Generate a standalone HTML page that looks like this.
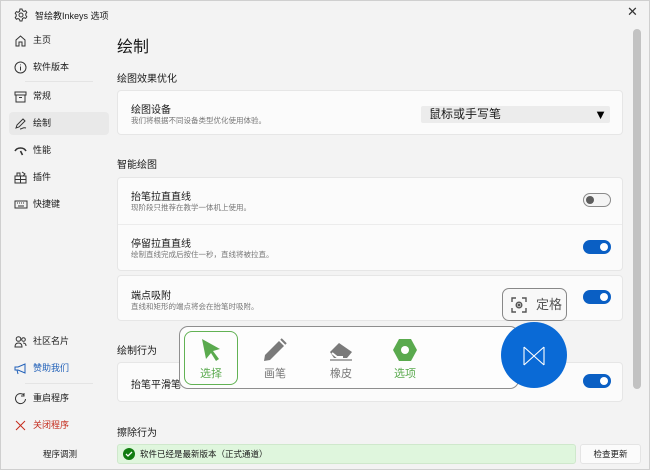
<!DOCTYPE html><html><head><meta charset="utf-8"><style>
*{box-sizing:border-box;margin:0;padding:0}
body{width:650px;height:470px;overflow:hidden;background:#f3f3f3;font-family:"Liberation Sans","Noto Sans CJK SC",sans-serif;color:#1a1a1a;position:relative;border:1px solid #cfcfcf}
.a{position:absolute}
.nav{position:absolute;left:8px;width:100px;height:23px;font-size:9px;line-height:23px;padding-left:24px;border-radius:4px}
.nav svg{position:absolute;left:5px;top:5px}
.sec{position:absolute;left:116px;font-size:10px}
.card{position:absolute;left:116px;width:506px;background:#fbfbfb;border:1px solid #e6e6e6;border-radius:4px}
.t{position:absolute;left:13px;font-size:10px}
.s{position:absolute;left:13px;font-size:7.5px;color:#777}
.tg{position:absolute;left:582px;width:28px;height:14px;border-radius:7px;background:#0a5fc4}
.tg::after{content:"";position:absolute;right:3px;top:3px;width:8px;height:8px;border-radius:50%;background:#fff}
.tg.off{background:#f4f4f4;border:1px solid #8a8a8a}
.tg.off::after{left:2px;top:2px;width:8px;height:8px;background:#5d5d5d}
.sep{position:absolute;left:24px;width:68px;height:1px;background:#e4e4e4}
.ti{position:absolute;width:50px;text-align:center;font-size:11px;color:#777}
</style></head><body>
<svg class="a" style="left:13px;top:7px" width="14" height="14" viewBox="0 0 14 14" fill="none" stroke="#333" stroke-width="1"><circle cx="7" cy="7" r="2"/><path d="M6 1h2l.5 1.7 1.5.8 1.6-.7 1.2 1.6-1 1.4v1.6l1 1.4-1.2 1.6-1.6-.7-1.5.8L8 13H6l-.5-1.7-1.5-.8-1.6.7-1.2-1.6 1-1.4V6.6l-1-1.4 1.2-1.6 1.6.7 1.5-.8z"/></svg>
<div class="a" style="left:34px;top:8px;font-size:9px">智绘教Inkeys 选项</div>
<div class="a" style="left:626px;top:3px;font-size:13px;color:#333">✕</div>

<div class="nav" style="top:28px"><svg width="13" height="13" viewBox="0 0 13 13" fill="none" stroke="#333"><path d="M2 6l4.5-4 4.5 4v6H8V8H5v4H2z"/></svg>主页</div>
<div class="nav" style="top:55px"><svg width="13" height="13" viewBox="0 0 13 13" fill="none" stroke="#333"><circle cx="6.5" cy="6.5" r="5.5"/><path d="M6.5 5.5v4M6.5 3.5v.8"/></svg>软件版本</div>
<div class="sep" style="top:80px"></div>
<div class="nav" style="top:84px"><svg width="13" height="13" viewBox="0 0 13 13" fill="none" stroke="#333"><path d="M1 2h11v3H1zM2 5v7h9V5M5 7.5h3"/></svg>常规</div>
<div class="nav" style="top:111px;background:#e9e9e9"><svg width="13" height="13" viewBox="0 0 13 13" fill="none" stroke="#333"><path d="M2 11l1-3 6-6 2 2-6 6zM6 12c2 0 3-2 6-1"/></svg>绘制</div>
<div class="nav" style="top:138px"><svg width="13" height="13" viewBox="0 0 13 13" fill="none" stroke="#333"><path d="M1 7a6 5 0 0 1 11 0M6.5 7l2 4" stroke-width="1.6"/></svg>性能</div>
<div class="nav" style="top:165px"><svg width="13" height="13" viewBox="0 0 13 13" fill="none" stroke="#333"><path d="M1 5h11v7H1zM6.5 5v7M1 8.5h11M3 5V2h3v3M8 1l3 2-2 2"/></svg>插件</div>
<div class="nav" style="top:192px"><svg width="14" height="13" viewBox="0 0 14 13" fill="none" stroke="#333"><rect x="1" y="3" width="12" height="7"/><path d="M3 5h1M5 5h1M7 5h1M9 5h1M4 8h6"/></svg>快捷键</div>

<div class="nav" style="top:329px"><svg width="13" height="13" viewBox="0 0 13 13" fill="none" stroke="#333"><circle cx="4.5" cy="4" r="2.3"/><circle cx="9.5" cy="4.5" r="1.8"/><path d="M1 12c0-3 1.5-4 3.5-4s3.5 1 3.5 4zM9 8c2 0 3 1 3 3"/></svg>社区名片</div>
<div class="nav" style="top:356px;color:#1f5fb8"><svg width="13" height="13" viewBox="0 0 13 13" fill="none" stroke="#1f5fb8"><path d="M1 5h3l7-3v9L4 8H1zM3 8l1 4"/></svg>赞助我们</div>
<div class="sep" style="top:382px"></div>
<div class="nav" style="top:386px"><svg width="13" height="13" viewBox="0 0 13 13" fill="none" stroke="#333"><path d="M10 3a5 5 0 1 0 1.5 4M10 1v3H7"/></svg>重启程序</div>
<div class="nav" style="top:413px;color:#c42b1c"><svg width="13" height="13" viewBox="0 0 13 13" fill="none" stroke="#c42b1c"><path d="M2 2l9 9M11 2l-9 9"/></svg>关闭程序</div>
<div class="a" style="left:42px;top:447px;font-size:8.5px">程序调测</div>

<div class="a" style="left:116px;top:32px;font-size:16px">绘制</div>
<div class="sec" style="top:69px">绘图效果优化</div>
<div class="card" style="top:89px;height:45px"><div class="t" style="top:10px">绘图设备</div><div class="s" style="top:24px">我们将根据不同设备类型优化使用体验。</div>
<div class="a" style="left:303px;top:15px;width:189px;height:17px;background:#ececec;border-radius:2px;font-size:12px;line-height:17px;padding-left:8px">鼠标或手写笔<span class="a" style="right:3px;top:0;font-size:13px;color:#000">▼</span></div></div>
<div class="sec" style="top:155px">智能绘图</div>
<div class="card" style="top:176px;height:94px"><div class="t" style="top:10px">抬笔拉直直线</div><div class="s" style="top:24px">现阶段只推荐在教学一体机上使用。</div>
<div class="a" style="left:0;top:46px;width:100%;height:1px;background:#ececec"></div>
<div class="t" style="top:57px">停留拉直直线</div><div class="s" style="top:71px">绘制直线完成后按住一秒，直线将被拉直。</div></div>
<div class="card" style="top:274px;height:46px"><div class="t" style="top:11px">端点吸附</div><div class="s" style="top:25px">直线和矩形的端点将会在抬笔时吸附。</div></div>
<div class="tg off" style="top:192px"></div>
<div class="tg" style="top:239px"></div>
<div class="tg" style="top:289px"></div>
<div class="sec" style="top:341px">绘制行为</div>
<div class="card" style="top:361px;height:40px"><div class="t" style="top:13px">抬笔平滑笔</div></div>
<div class="tg" style="top:373px"></div>
<div class="sec" style="top:423px">擦除行为</div>
<div class="a" style="left:116px;top:443px;width:459px;height:20px;background:#dff6dd;border:1px solid #cfe8cc;border-radius:3px;font-size:8.5px;line-height:18px;padding-left:22px">软件已经是最新版本（正式通道）
<svg class="a" style="left:5px;top:3px" width="12" height="12" viewBox="0 0 12 12"><circle cx="6" cy="6" r="6" fill="#107c10"/><path d="M3 6l2 2 4-4" stroke="#fff" fill="none" stroke-width="1.3"/></svg></div>
<div class="a" style="left:579px;top:443px;width:61px;height:20px;background:#fbfbfb;border:1px solid #e4e4e4;border-radius:3px;font-size:8.5px;line-height:18px;text-align:center">检查更新</div>
<div class="a" style="left:632px;top:28px;width:8px;height:360px;background:#c2c2c2;border-radius:4px"></div>

<div class="a" style="left:501px;top:287px;width:65px;height:33px;background:#f8f8f8;border:1px solid #888;border-radius:7px;font-size:13px;color:#555;line-height:31px;padding-left:33px">定格
<svg class="a" style="left:8px;top:8px" width="16" height="16" viewBox="0 0 16 16" fill="none" stroke="#555" stroke-width="1.4"><path d="M1 5V1h4M11 1h4v4M15 11v4h-4M5 15H1v-4"/><circle cx="8" cy="8" r="2.8"/><circle cx="8" cy="8" r=".8" fill="#555"/></svg></div>
<div class="a" style="left:178px;top:325px;width:340px;height:63px;background:#fdfdfd;border:1px solid #8e8e8e;border-radius:9px"></div>
<div class="a" style="left:183px;top:330px;width:54px;height:54px;border:1.5px solid #62b254;border-radius:8px"></div>
<svg class="a" style="left:199px;top:337px" width="22" height="24" viewBox="0 0 22 24"><path d="M2 1l18 10-7 2 6 8-3 2-5-8-5 6z" fill="#5aaa4e"/></svg>
<div class="ti" style="left:185px;top:364px;color:#5aaa4e">选择</div>
<svg class="a" style="left:262px;top:337px" width="24" height="24" viewBox="0 0 24 24"><path d="M1 23l1-6L16 3l5 5L7 22z" fill="#7a7a7a"/><path d="M18 1l5 5" stroke="#7a7a7a" stroke-width="2"/></svg>
<div class="ti" style="left:249px;top:364px">画笔</div>
<svg class="a" style="left:327px;top:340px" width="26" height="20" viewBox="0 0 26 20"><path d="M2 11L11 2l13 9-5 6H6z" fill="#7a7a7a"/><path d="M4 12l5 4h6" stroke="#fff" stroke-width="2" fill="none"/><path d="M2 19h22" stroke="#7a7a7a" stroke-width="1.3"/></svg>
<div class="ti" style="left:315px;top:364px">橡皮</div>
<svg class="a" style="left:391px;top:337px" width="26" height="24" viewBox="0 0 26 24"><path d="M7 1h12l6 11-6 11H7L1 12z" fill="#5aaa4e"/><circle cx="13" cy="12" r="4" fill="#fff"/></svg>
<div class="ti" style="left:379px;top:364px;color:#5aaa4e">选项</div>
<div class="a" style="left:500px;top:321px;width:66px;height:66px;border-radius:50%;background:#0a6ad6"></div>
<svg class="a" style="left:522px;top:345px" width="22" height="20" viewBox="0 0 22 20" fill="none" stroke="#fff" stroke-width="1.1"><path d="M1 1v18M21 1v18M1 1l20 18M21 1L1 19"/></svg>
</body></html>
